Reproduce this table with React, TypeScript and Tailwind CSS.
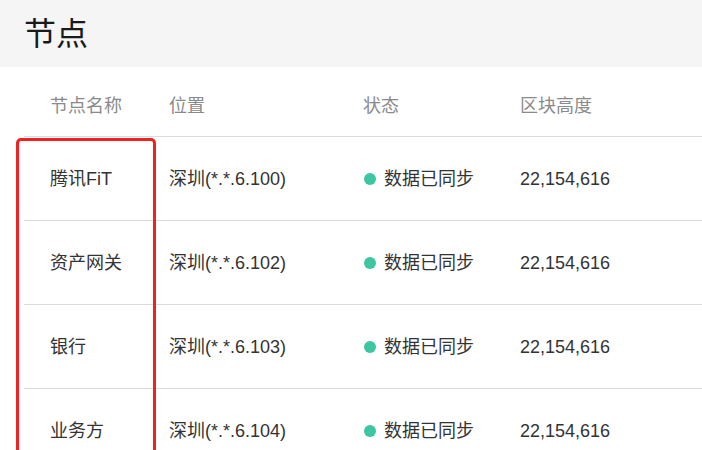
import React from "react";

const rows = [
  { name: "腾讯FiT", loc: "深圳(*.*.6.100)" },
  { name: "资产网关", loc: "深圳(*.*.6.102)" },
  { name: "银行", loc: "深圳(*.*.6.103)" },
  { name: "业务方", loc: "深圳(*.*.6.104)" },
];

const font = { fontFamily: '"Liberation Sans", "Noto Sans CJK SC", sans-serif' } as React.CSSProperties;

export default function App() {
  return (
    <div className="w-[702px] h-[450px] overflow-hidden bg-white relative" style={font}>
      <div className="h-[67px] bg-[#f5f5f5] flex items-center pl-6">
        <span className="text-[32px] leading-none text-[#1a1a1a]">节点</span>
      </div>
      <div className="pl-6">
        <div className="grid grid-cols-[119px_194px_157px_1fr] h-[70px] pt-[27px] border-b border-[#dcdcdc] text-[18px] leading-[24px] text-[#8a8a8a]">
          <div className="pl-[26px]">节点名称</div>
          <div className="pl-[26px]">位置</div>
          <div className="pl-[26px]">状态</div>
          <div className="pl-[26px]">区块高度</div>
        </div>
        {rows.map((r) => (
          <div
            key={r.name}
            className="grid grid-cols-[119px_194px_157px_1fr] h-[84px] items-center border-b border-[#dcdcdc] text-[18px] leading-[24px] text-[#333333]"
          >
            <div className="pl-[26px]">{r.name}</div>
            <div className="pl-[26px]">{r.loc}</div>
            <div className="pl-[27px] flex items-center gap-2">
              <span className="w-3 h-3 rounded-full bg-[#3cc6a2] shrink-0" />
              <span>数据已同步</span>
            </div>
            <div className="pl-[26px]">22,154,616</div>
          </div>
        ))}
      </div>
      <div className="absolute left-4 top-[138px] w-[140px] h-[340px] border-[3px] border-[#f0211f] rounded-[5px]" />
    </div>
  );
}
